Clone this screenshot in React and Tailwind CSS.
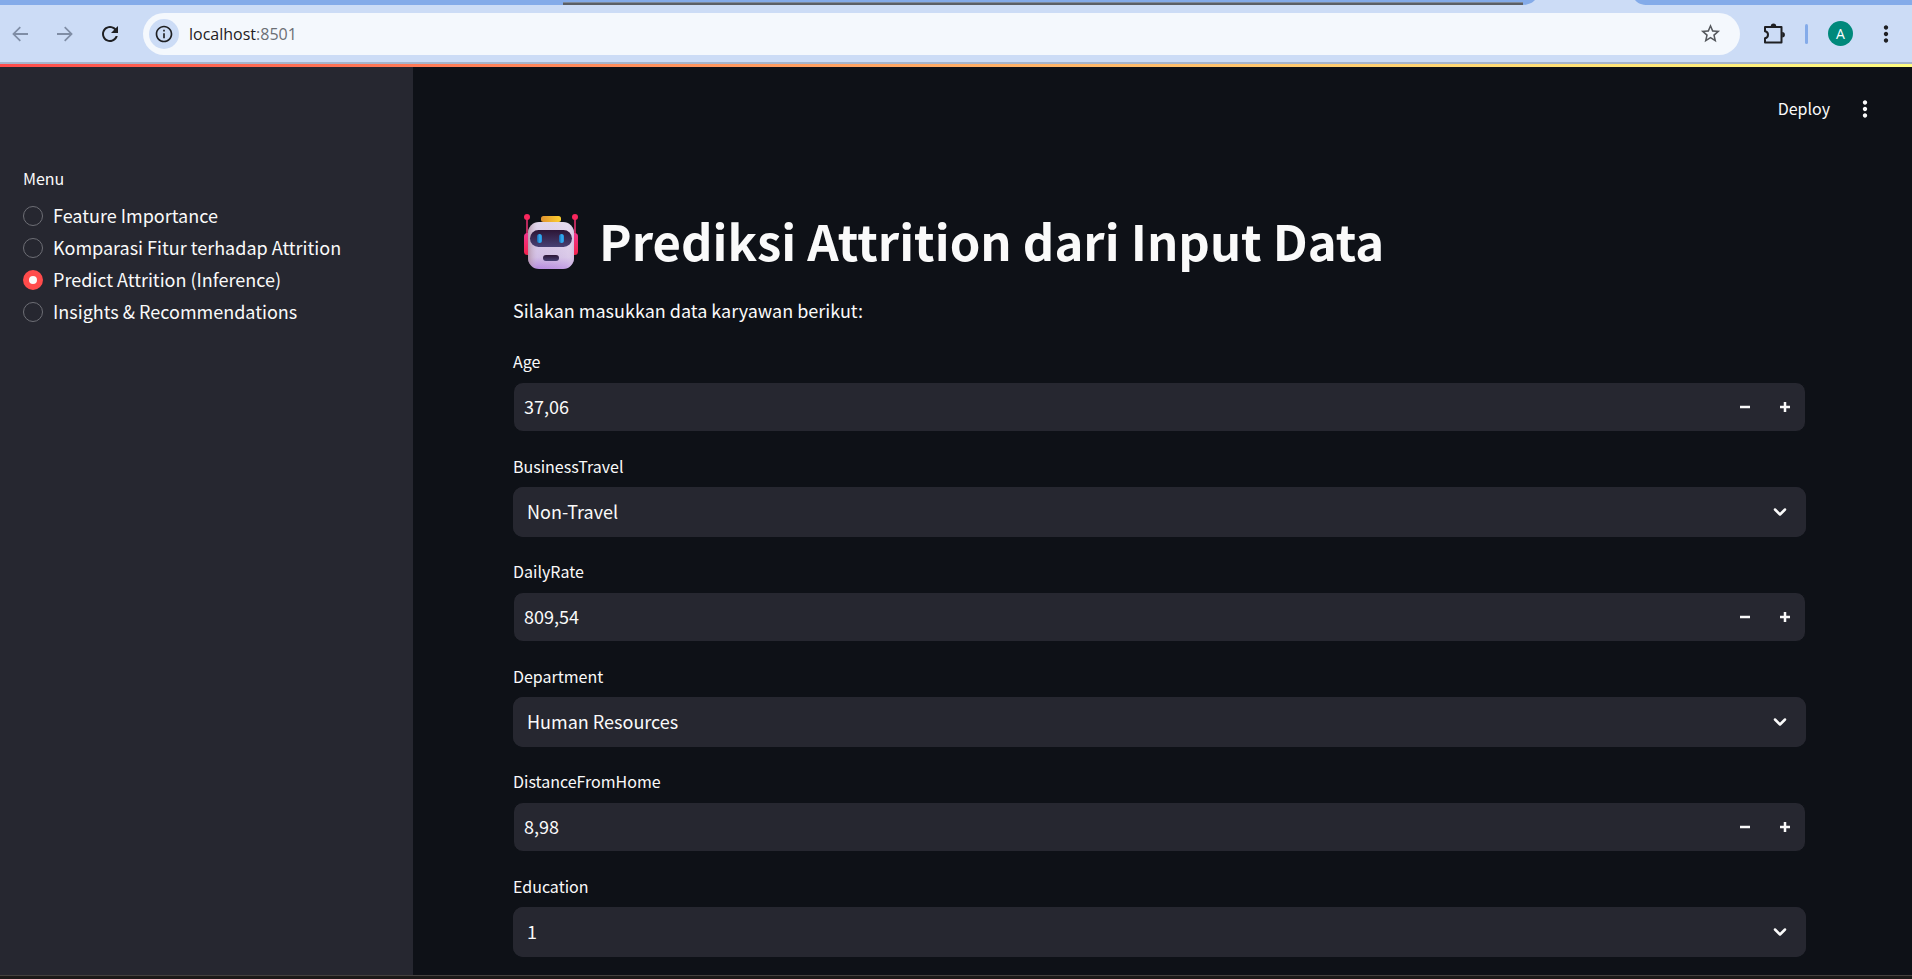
import { useState } from "react";

const MENU = [
  "Feature Importance",
  "Komparasi Fitur terhadap Attrition",
  "Predict Attrition (Inference)",
  "Insights & Recommendations",
];

const FIELDS = [
  { name: "Age", value: "37,06" },
  { name: "BusinessTravel", options: ["Non-Travel", "Travel_Rarely", "Travel_Frequently"] },
  { name: "DailyRate", value: "809,54" },
  { name: "Department", options: ["Human Resources", "Research & Development", "Sales"] },
  { name: "DistanceFromHome", value: "8,98" },
  { name: "Education", options: ["1", "2", "3", "4", "5"] },
];

function MaterialIcon({ d, className }) {
  return (
    <svg viewBox="0 0 24 24" fill="currentColor" aria-hidden="true" className={className}>
      <path d={d} />
    </svg>
  );
}

const DOTS =
  "M12 8c1.1 0 2-.9 2-2s-.9-2-2-2-2 .9-2 2 .9 2 2 2zm0 2c-1.1 0-2 .9-2 2s.9 2 2 2 2-.9 2-2-.9-2-2-2zm0 6c-1.1 0-2 .9-2 2s.9 2 2 2 2-.9 2-2-.9-2-2-2z";

function BrowserBar() {
  return (
    <header className="flex flex-col bg-[#ccdcf6] font-['Open_Sans',sans-serif]">
      <div className="flex h-[5px] items-end bg-[#84abe9]">
        <div className="w-[563px]" />
        <div className="h-[3px] flex-1 border-t border-[#7d899b] bg-[#5b5f66]" />
        <svg className="h-[5px] w-[125px]" viewBox="0 0 125 5" aria-hidden="true">
          <path d="M0 5C6 4.500 9 3 12 0H112C114 3 119 5 125 5z" fill="#ccdcf6" />
        </svg>
        <div className="w-[264px]" />
      </div>
      <div className="flex h-[57px] items-center rounded-t-xl pr-[13px] text-[#1f2023]">
        <button aria-label="Back" className="ml-2 text-[#7f8da5]">
          <MaterialIcon className="size-6" d="M20 11.100H7.600l5.300-5.300L11.700 4.500 4.200 12l7.500 7.500 1.200-1.300L7.600 12.900H20z" />
        </button>
        <button aria-label="Forward" className="ml-[21px] text-[#7f8da5]">
          <MaterialIcon className="size-6" d="M4 12.900h12.400l-5.300 5.300 1.200 1.300 7.500-7.500-7.500-7.500-1.200 1.300 5.300 5.300H4z" />
        </button>
        <button aria-label="Reload" className="ml-[21px]">
          <MaterialIcon
            className="size-6"
            d="M17.650 6.350C16.200 4.900 14.210 4 12 4c-4.420 0-7.990 3.580-7.990 8s3.570 8 7.990 8c3.730 0 6.840-2.550 7.730-6h-2.080c-.820 2.330-3.040 4-5.650 4-3.310 0-6-2.690-6-6s2.690-6 6-6c1.660 0 3.140.690 4.220 1.780L13 11h7V4z"
          />
        </button>
        <div className="ml-[21px] flex h-[42px] flex-1 items-center rounded-full bg-[#f4f8fd] pl-1.5 pr-[18px]">
          <button aria-label="Site information" className="grid size-[30px] place-items-center rounded-full bg-[#ccdcf6]">
            <MaterialIcon
              className="size-5"
              d="M11 7h2v2h-2zm0 4h2v6h-2zm1-9C6.480 2 2 6.480 2 12s4.480 10 10 10 10-4.480 10-10S17.520 2 12 2zm0 18c-4.410 0-8-3.590-8-8s3.590-8 8-8 8 3.590 8 8-3.590 8-8 8z"
            />
          </button>
          <span className="ml-2.5 flex-1 text-base">
            localhost<span className="text-[#6b6f75]">:8501</span>
          </span>
          <button aria-label="Bookmark this page" className="text-[#55585d]">
            <MaterialIcon
              className="size-[23px]"
              d="M22 9.240l-7.190-.620L12 2 9.190 8.630 2 9.240l5.460 4.730L5.820 21 12 17.270 18.180 21l-1.630-7.030L22 9.240zM12 15.400l-3.760 2.270 1-4.280-3.320-2.880 4.380-.380L12 6.100l1.710 4.040 4.380.380-3.320 2.880 1 4.280L12 15.400z"
            />
          </button>
        </div>
        <button aria-label="Extensions" className="ml-[22px]">
          <svg viewBox="0 0 24 24" className="size-6" fill="none" stroke="currentColor" strokeWidth="2" strokeLinejoin="round" aria-hidden="true">
            <path d="M3 5H19.500V20.500H3V16.200C5 15.800 6 14.500 6 12.700S5 9.600 3 9.200z" />
            <path d="M8.800 4.200A2.700 2.700 0 0 1 14.200 4.200zM20.200 10A2.700 2.700 0 0 1 20.200 15.400z" fill="currentColor" stroke="none" />
          </svg>
        </button>
        <div className="ml-[19px] h-5 w-[3px] rounded-full bg-[#84abe9]" />
        <button aria-label="Profile" className="ml-5 grid size-[25px] place-items-center rounded-full bg-[#00897b] text-sm text-white">
          A
        </button>
        <button aria-label="Browser menu" className="ml-5">
          <MaterialIcon className="size-[26px]" d={DOTS} />
        </button>
      </div>
      <div className="h-0.5 bg-[#a5b4cc]" />
    </header>
  );
}

function Robot() {
  return (
    <svg viewBox="0 0 56 56" className="size-14" role="img" aria-label="Robot">
      <defs>
        <linearGradient id="face" x1="0" y1="0" x2="0" y2="1">
          <stop offset="0" stopColor="#e2d8ec" />
          <stop offset="0.75" stopColor="#d2bfe5" />
          <stop offset="1" stopColor="#b78be0" />
        </linearGradient>
        <linearGradient id="shade" x1="0" y1="0" x2="1" y2="0">
          <stop offset="0" stopColor="#a98596" />
          <stop offset="0.2" stopColor="#c9b3c8" stopOpacity="0" />
          <stop offset="0.85" stopColor="#f2eaf5" stopOpacity="0.3" />
          <stop offset="1" stopColor="#d0b8dd" />
        </linearGradient>
        <linearGradient id="visor" x1="0" y1="0" x2="0" y2="1">
          <stop offset="0" stopColor="#2c1535" />
          <stop offset="1" stopColor="#474074" />
        </linearGradient>
        <linearGradient id="cap" x1="0" y1="0" x2="1" y2="0">
          <stop offset="0" stopColor="#df922f" />
          <stop offset="1" stopColor="#ffd12f" />
        </linearGradient>
        <linearGradient id="eye" x1="0" y1="0" x2="1" y2="0">
          <stop offset="0" stopColor="#1767b0" />
          <stop offset="0.6" stopColor="#35b0f4" />
          <stop offset="1" stopColor="#2390dc" />
        </linearGradient>
        <linearGradient id="ear" x1="0" y1="0" x2="0" y2="1">
          <stop offset="0" stopColor="#f0368d" />
          <stop offset="1" stopColor="#f3224c" />
        </linearGradient>
      </defs>
      <path d="M4 4V24M52 4V24" stroke="#b9295c" strokeWidth="2" />
      <circle cx="4" cy="4" r="3" fill="#f8275d" />
      <circle cx="52" cy="4" r="3" fill="#f8275d" />
      <rect x="1" y="20" width="8" height="22" rx="3.500" fill="url(#ear)" />
      <rect x="47" y="20" width="8" height="22" rx="3.500" fill="url(#ear)" />
      <rect x="5" y="9" width="46" height="47" rx="11" fill="url(#face)" />
      <rect x="5" y="9" width="46" height="47" rx="11" fill="url(#shade)" opacity="0.7" />
      <rect x="18" y="3" width="20" height="6" rx="2.500" fill="url(#cap)" />
      <rect x="7" y="17" width="42" height="17" rx="8.500" fill="url(#visor)" />
      <rect x="14" y="21" width="5" height="9" rx="2.500" fill="url(#eye)" />
      <rect x="36" y="21" width="5" height="9" rx="2.500" fill="url(#eye)" />
      <rect x="20" y="42" width="16" height="6" rx="3" fill="url(#visor)" />
    </svg>
  );
}

function NumberField({ name, value }) {
  return (
    <div className="flex h-[50px] rounded-[10px] border border-[#0e1117] bg-[#262730]">
      <input
        id={name}
        defaultValue={value}
        inputMode="decimal"
        className="min-w-0 flex-1 bg-transparent pb-0.5 pl-2.5 text-lg outline-none"
      />
      <button aria-label={"Decrease " + name} className="grid w-10 place-items-center">
        <svg viewBox="0 0 10 10" className="size-2.5" aria-hidden="true">
          <path d="M0 5H10" stroke="currentColor" strokeWidth="2.500" />
        </svg>
      </button>
      <button aria-label={"Increase " + name} className="grid w-10 place-items-center">
        <svg viewBox="0 0 10 10" className="size-2.5" aria-hidden="true">
          <path d="M0 5H10M5 0V10" stroke="currentColor" strokeWidth="2.500" />
        </svg>
      </button>
    </div>
  );
}

function SelectField({ name, options }) {
  return (
    <div className="relative h-[50px] rounded-[10px] bg-[#262730]">
      <select id={name} className="size-full appearance-none rounded-[10px] bg-[#262730] px-3.5 pb-0.5 text-lg outline-none">
        {options.map((option) => (
          <option key={option}>{option}</option>
        ))}
      </select>
      <svg
        viewBox="0 0 14 10"
        className="pointer-events-none absolute right-[19px] top-5 h-2.5 w-3.5"
        fill="none"
        stroke="currentColor"
        strokeWidth="2.500"
        strokeLinecap="round"
        strokeLinejoin="round"
        aria-hidden="true"
      >
        <path d="M2 2.500L7 7.500L12 2.500" />
      </svg>
    </div>
  );
}

export default function App() {
  const [page, setPage] = useState(MENU[2]);
  return (
    <div className="flex min-h-screen flex-col bg-[#0e1117] font-['Noto_Sans_CJK_SC',sans-serif] text-[#fafafa]">
      <BrowserBar />
      <div className="h-[3px] bg-linear-to-r from-[#ff4b4b] to-[#fffd80]" />
      <div className="flex flex-1">
        <aside className="w-[413px] shrink-0 bg-[#262730] px-[23px] pt-24">
          <fieldset>
            <legend className="text-base leading-[30px]">Menu</legend>
            <div className="mt-[7px] flex flex-col">
              {MENU.map((item) => (
                <label key={item} className="flex h-8 items-center gap-2.5 text-lg">
                  <input
                    type="radio"
                    name="menu"
                    checked={page === item}
                    onChange={() => setPage(item)}
                    className="size-5 shrink-0 appearance-none rounded-full border border-[#6d6e75] checked:border-[6px] checked:border-[#ff4b4b] checked:bg-[#fafafa]"
                  />
                  <span className="pb-0.5">{item}</span>
                </label>
              ))}
            </div>
          </fieldset>
        </aside>
        <div className="flex min-w-0 flex-1 flex-col">
          <div className="flex h-[84px] items-center justify-end gap-[22px] pr-[34px]">
            <button className="pb-0.5 text-base">Deploy</button>
            <button aria-label="App menu">
              <MaterialIcon className="size-[26px]" d={DOTS} />
            </button>
          </div>
          <main className="pb-[18px] pl-[100px] pr-[106px]">
            <h1 className="mt-[58px] flex h-16 items-center gap-5 pl-2.5 text-[49px] font-bold leading-[60px]">
              <Robot />
              <span className="pb-0.5">Prediksi Attrition dari Input Data</span>
            </h1>
            <p className="mt-[22px] text-lg leading-[30px]">Silakan masukkan data karyawan berikut:</p>
            <form className="mt-[21px] flex flex-col gap-[19px]" onSubmit={(e) => e.preventDefault()}>
              {FIELDS.map((field) => (
                <div key={field.name} className="flex flex-col gap-1.5">
                  <label htmlFor={field.name} className="h-[30px] text-base leading-[30px]">
                    {field.name}
                  </label>
                  {field.options ? <SelectField {...field} /> : <NumberField {...field} />}
                </div>
              ))}
            </form>
          </main>
        </div>
      </div>
      <div className="h-1 border-t border-[#45423f] bg-[#1c1a19]" />
    </div>
  );
}
